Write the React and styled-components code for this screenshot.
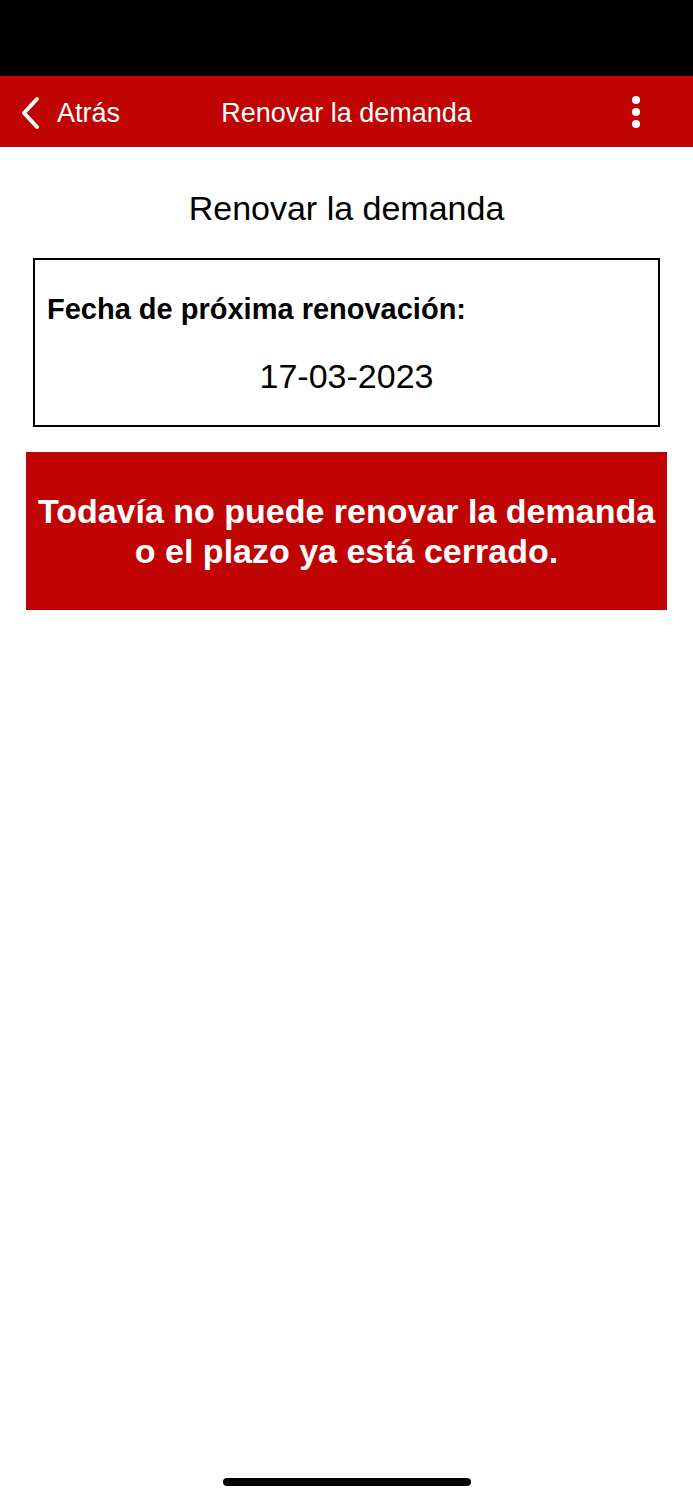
import styled, { createGlobalStyle } from "styled-components";

const GlobalStyle = createGlobalStyle`
  body {
    margin: 0;
    background: #ffffff;
    font-family: "Liberation Sans", Arial, sans-serif;
  }
`;

const Screen = styled.div`
  width: 693px;
  height: 1500px;
  display: flex;
  flex-direction: column;
  background: #ffffff;
`;

const StatusBar = styled.div`
  height: 76px;
  background: #000000;
`;

const NavBar = styled.div`
  height: 71px;
  box-sizing: border-box;
  padding-top: 3px;
  background: #c00404;
  display: grid;
  grid-template-columns: 1fr auto 1fr;
  align-items: center;
  color: #ffffff;
`;

const BackButton = styled.div`
  display: flex;
  align-items: center;
  gap: 15px;
  padding-left: 20px;
  font-size: 27px;
`;

const NavTitle = styled.div`
  font-size: 27px;
`;

const MenuButton = styled.div`
  justify-self: end;
  padding-right: 53px;
  margin-top: -2px;
  display: flex;
  flex-direction: column;
  gap: 4px;
`;

const Dot = styled.span`
  width: 8px;
  height: 8px;
  border-radius: 50%;
  background: #ffffff;
`;

const Content = styled.div`
  flex: 1;
  display: flex;
  flex-direction: column;
  padding: 0 26px;
`;

const PageTitle = styled.h1`
  margin: 41px 0 0;
  text-align: center;
  font-size: 34px;
  font-weight: 400;
  line-height: 40px;
  color: #000000;
`;

const InfoCard = styled.div`
  margin: 30px 7px 0;
  border: 2px solid #000000;
  padding: 33px 12px 31px;
  display: flex;
  flex-direction: column;
  gap: 33px;
`;

const InfoLabel = styled.div`
  font-size: 29px;
  font-weight: 700;
  line-height: 32px;
  color: #000000;
`;

const InfoValue = styled.div`
  text-align: center;
  font-size: 34px;
  line-height: 36px;
  color: #000000;
`;

const Alert = styled.div`
  margin-top: 25px;
  height: 158px;
  background: #c00404;
  display: flex;
  align-items: center;
  justify-content: center;
  text-align: center;
  color: #ffffff;
  font-size: 34px;
  font-weight: 700;
  line-height: 40px;
`;

const HomeBar = styled.div`
  align-self: center;
  width: 248px;
  height: 8px;
  border-radius: 4px;
  background: #000000;
  margin-bottom: 14px;
`;

const Chevron = () => (
  <svg width="22" height="34" viewBox="0 0 22 34">
    <path
      d="M17 3 L4 17 L17 31"
      fill="none"
      stroke="#ffffff"
      strokeWidth="4"
      strokeLinecap="round"
      strokeLinejoin="round"
    />
  </svg>
);

export default function App() {
  return (
    <>
      <GlobalStyle />
      <Screen>
        <StatusBar />
        <NavBar>
          <BackButton>
            <Chevron />
            Atrás
          </BackButton>
          <NavTitle>Renovar la demanda</NavTitle>
          <MenuButton>
            <Dot />
            <Dot />
            <Dot />
          </MenuButton>
        </NavBar>
        <Content>
          <PageTitle>Renovar la demanda</PageTitle>
          <InfoCard>
            <InfoLabel>Fecha de próxima renovación:</InfoLabel>
            <InfoValue>17-03-2023</InfoValue>
          </InfoCard>
          <Alert>
            Todavía no puede renovar la demanda
            <br />
            o el plazo ya está cerrado.
          </Alert>
        </Content>
        <HomeBar />
      </Screen>
    </>
  );
}
